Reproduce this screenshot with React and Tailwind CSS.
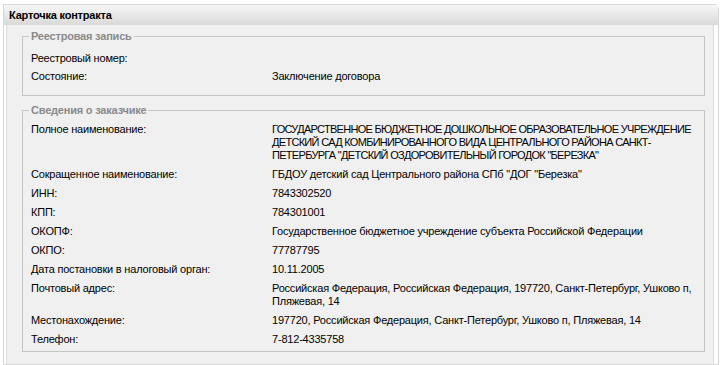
import React from "react";

const registry = [
  { label: "Реестровый номер:", value: [""] },
  { label: "Состояние:", value: ["Заключение договора"] },
];

const customer = [
  {
    label: "Полное наименование:",
    caps: true,
    value: [
      "ГОСУДАРСТВЕННОЕ БЮДЖЕТНОЕ ДОШКОЛЬНОЕ ОБРАЗОВАТЕЛЬНОЕ УЧРЕЖДЕНИЕ",
      "ДЕТСКИЙ САД КОМБИНИРОВАННОГО ВИДА ЦЕНТРАЛЬНОГО РАЙОНА САНКТ-",
      'ПЕТЕРБУРГА "ДЕТСКИЙ ОЗДОРОВИТЕЛЬНЫЙ ГОРОДОК "БЕРЕЗКА"',
    ],
  },
  {
    label: "Сокращенное наименование:",
    value: ['ГБДОУ детский сад Центрального района СПб "ДОГ "Березка"'],
  },
  { label: "ИНН:", value: ["7843302520"] },
  { label: "КПП:", value: ["784301001"] },
  {
    label: "ОКОПФ:",
    value: ["Государственное бюджетное учреждение субъекта Российской Федерации"],
  },
  { label: "ОКПО:", value: ["77787795"] },
  { label: "Дата постановки в налоговый орган:", value: ["10.11.2005"] },
  {
    label: "Почтовый адрес:",
    value: [
      "Российская Федерация, Российская Федерация, 197720, Санкт-Петербург, Ушково п,",
      "Пляжевая, 14",
    ],
  },
  {
    label: "Местонахождение:",
    value: ["197720, Российская Федерация, Санкт-Петербург, Ушково п, Пляжевая, 14"],
  },
  { label: "Телефон:", value: ["7-812-4335758"] },
];

const Rows = ({ items, gap }) => (
  <div className={`flex flex-col ${gap}`}>
    {items.map((row) => (
      <div key={row.label} className="flex leading-[13px]">
        <div className="w-[241px] shrink-0">{row.label}</div>
        <div
          className={`flex flex-col whitespace-nowrap ${
            row.caps ? "tracking-[-0.7px]" : ""
          }`}
        >
          {row.value.map((line, i) => (
            <span key={i} className="min-h-[13px]">
              {line}
            </span>
          ))}
        </div>
      </div>
    ))}
  </div>
);

const Section = ({ title, children, className }) => (
  <fieldset
    className={`ml-[15px] mr-[8px] border border-[#c4c4c4] pl-[8px] ${className}`}
  >
    <legend className="-ml-[2px] px-[2px] font-bold leading-[13px] text-[#8a8a8a]">
      {title}
    </legend>
    {children}
  </fieldset>
);

export default function App() {
  return (
    <div
      className="min-h-[365px] bg-white pl-[3px] pr-[4px] pt-[4px] text-[11px] tracking-[-0.2px] text-black"
      style={{ fontFamily: "'Liberation Sans', Arial, sans-serif" }}
    >
      <div className="rounded-tr-[5px] border border-[#d6d6d6] bg-white">
        <div className="flex h-[20px] items-center bg-gradient-to-b from-[#f7f7f7] to-[#d9d9d9] pl-[5px] font-bold">
          Карточка контракта
        </div>
        <div className="ml-[2px] mr-[4px] border-x border-[#dcdcdc] bg-[#f0f0f0] pb-[12px] pt-[5px]">
          <Section title="Реестровая запись" className="pt-[9px] pb-[12px]">
            <Rows items={registry} gap="gap-[5px]" />
          </Section>
          <Section title="Сведения о заказчике" className="mt-[8px] pt-[6px] pb-[5px]">
            <Rows items={customer} gap="gap-[6px]" />
          </Section>
        </div>
      </div>
    </div>
  );
}
